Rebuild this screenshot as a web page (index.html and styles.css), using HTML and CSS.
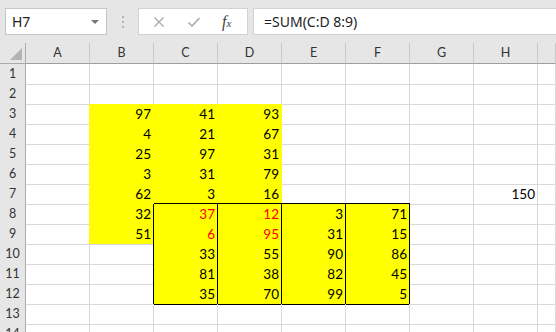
FILE: index.html
```html
<!DOCTYPE html>
<html lang="en">
<head>
    <meta charset="UTF-8">
    <title>Sheet1 - Excel</title>
    <link rel="stylesheet" href="styles.css">
</head>
<body>
    <div class="formula-bar">
        <div class="name-box">
            <span>H7</span>
            <span class="caret"></span>
        </div>
        <svg class="grip" width="4" height="14" viewBox="0 0 4 14">
            <circle cx="2" cy="2" r="1" fill="#a0a0a0"/>
            <circle cx="2" cy="7" r="1" fill="#a0a0a0"/>
            <circle cx="2" cy="12" r="1" fill="#a0a0a0"/>
        </svg>
        <div class="fx-buttons">
            <svg width="12" height="12" viewBox="0 0 12 12">
                <path d="M1.5 1.5 L10.5 10.5 M10.5 1.5 L1.5 10.5" stroke="#ababab" stroke-width="1.4" fill="none"/>
            </svg>
            <svg width="14" height="12" viewBox="0 0 14 12">
                <path d="M1.5 6.5 L5 10 L12.5 2" stroke="#ababab" stroke-width="1.6" fill="none"/>
            </svg>
            <span class="fx">f<i>x</i></span>
        </div>
        <div class="formula-input">=SUM(C:D 8:9)</div>
    </div>

    <div class="sheet">
        <div class="row head">
            <div class="corner"><span class="tri"></span></div>
            <div class="ch">A</div><div class="ch">B</div><div class="ch">C</div><div class="ch">D</div>
            <div class="ch">E</div><div class="ch">F</div><div class="ch">G</div><div class="ch">H</div><div class="ch"></div>
        </div>
        <div class="row">
            <div class="rh">1</div>
            <div class="c"></div><div class="c"></div><div class="c"></div><div class="c"></div>
            <div class="c"></div><div class="c"></div><div class="c"></div><div class="c"></div><div class="c"></div>
        </div>
        <div class="row">
            <div class="rh">2</div>
            <div class="c"></div><div class="c yb"></div><div class="c yb"></div><div class="c yb"></div>
            <div class="c"></div><div class="c"></div><div class="c"></div><div class="c"></div><div class="c"></div>
        </div>
        <div class="row">
            <div class="rh">3</div>
            <div class="c yr"></div><div class="c y">97</div><div class="c y">41</div><div class="c y">93</div>
            <div class="c"></div><div class="c"></div><div class="c"></div><div class="c"></div><div class="c"></div>
        </div>
        <div class="row">
            <div class="rh">4</div>
            <div class="c yr"></div><div class="c y">4</div><div class="c y">21</div><div class="c y">67</div>
            <div class="c"></div><div class="c"></div><div class="c"></div><div class="c"></div><div class="c"></div>
        </div>
        <div class="row">
            <div class="rh">5</div>
            <div class="c yr"></div><div class="c y">25</div><div class="c y">97</div><div class="c y">31</div>
            <div class="c"></div><div class="c"></div><div class="c"></div><div class="c"></div><div class="c"></div>
        </div>
        <div class="row">
            <div class="rh">6</div>
            <div class="c yr"></div><div class="c y">3</div><div class="c y">31</div><div class="c y">79</div>
            <div class="c"></div><div class="c"></div><div class="c"></div><div class="c"></div><div class="c"></div>
        </div>
        <div class="row">
            <div class="rh">7</div>
            <div class="c yr"></div><div class="c y">62</div><div class="c y kb">3</div><div class="c y kb">16</div>
            <div class="c kb"></div><div class="c kb"></div><div class="c"></div><div class="c">150</div><div class="c"></div>
        </div>
        <div class="row">
            <div class="rh">8</div>
            <div class="c yr"></div><div class="c y kr">32</div><div class="c y k kt red">37</div><div class="c y k kt red">12</div>
            <div class="c y k kt">3</div><div class="c y k kt">71</div><div class="c"></div><div class="c"></div><div class="c"></div>
        </div>
        <div class="row">
            <div class="rh">9</div>
            <div class="c yr"></div><div class="c y kr gb">51</div><div class="c y k red">6</div><div class="c y k red">95</div>
            <div class="c y k">31</div><div class="c y k">15</div><div class="c"></div><div class="c"></div><div class="c"></div>
        </div>
        <div class="row">
            <div class="rh">10</div>
            <div class="c"></div><div class="c kr"></div><div class="c y k">33</div><div class="c y k">55</div>
            <div class="c y k">90</div><div class="c y k">86</div><div class="c"></div><div class="c"></div><div class="c"></div>
        </div>
        <div class="row">
            <div class="rh">11</div>
            <div class="c"></div><div class="c kr"></div><div class="c y k">81</div><div class="c y k">38</div>
            <div class="c y k">82</div><div class="c y k">45</div><div class="c"></div><div class="c"></div><div class="c"></div>
        </div>
        <div class="row">
            <div class="rh">12</div>
            <div class="c"></div><div class="c kr"></div><div class="c y k">35</div><div class="c y k">70</div>
            <div class="c y k">99</div><div class="c y k">5</div><div class="c"></div><div class="c"></div><div class="c"></div>
        </div>
        <div class="row">
            <div class="rh">13</div>
            <div class="c"></div><div class="c"></div><div class="c"></div><div class="c"></div>
            <div class="c"></div><div class="c"></div><div class="c"></div><div class="c"></div><div class="c"></div>
        </div>
        <div class="row">
            <div class="rh">14</div>
            <div class="c"></div><div class="c"></div><div class="c"></div><div class="c"></div>
            <div class="c"></div><div class="c"></div><div class="c"></div><div class="c"></div><div class="c"></div>
        </div>
    </div>
</body>
</html>
```

FILE: styles.css
```css
* {
    box-sizing: border-box;
}
body {
    margin: 0;
    width: 556px;
    height: 332px;
    overflow: hidden;
    background: #ffffff;
    font-family: Lato, "Liberation Sans", sans-serif;
    color: #000;
}

/* formula bar */
.formula-bar {
    height: 43px;
    background: #e6e6e6;
    display: flex;
    align-items: flex-start;
    padding-top: 8px;
    padding-left: 5px;
}
.name-box {
    width: 102px;
    height: 27px;
    background: #fff;
    border: 1px solid #c6c6c6;
    display: flex;
    align-items: center;
    justify-content: space-between;
    padding: 0 6px 0 6px;
    font-family: "Noto Sans", sans-serif;
    font-size: 14px;
    color: #222;
}
.caret {
    width: 0;
    height: 0;
    border-left: 4px solid transparent;
    border-right: 4px solid transparent;
    border-top: 4px solid #777;
    margin-right: 1px;
}
.grip {
    margin: 7px 13px 0 14px;
}
.fx-buttons {
    width: 110px;
    height: 27px;
    background: #fff;
    border: 1px solid #d2d2d2;
    display: flex;
    align-items: center;
    padding-left: 14px;
}
.fx-buttons svg:first-child {
    margin-right: 22px;
}
.fx-buttons svg:nth-child(2) {
    margin-right: 21px;
}
.fx {
    font-family: "Liberation Serif", serif;
    font-style: italic;
    font-size: 16px;
    color: #444;
}
.fx i {
    font-size: 11px;
}
.formula-input {
    flex: 1;
    height: 27px;
    margin-left: 5px;
    background: #fff;
    border: 1px solid #d2d2d2;
    border-right: none;
    font-family: "Noto Sans", sans-serif;
    font-size: 14px;
    color: #222;
    display: flex;
    align-items: center;
    padding-left: 10px;
}

/* grid */
.row {
    display: grid;
    grid-template-columns: 26px repeat(8, 64px) 1fr;
    height: 20px;
}
.row.head {
    height: 21px;
    background: #e6e6e6;
}
.corner {
    border-right: 1px solid #ababab;
    border-bottom: 1px solid #ababab;
    position: relative;
}
.tri {
    position: absolute;
    right: 3px;
    bottom: 3px;
    width: 0;
    height: 0;
    border-left: 12px solid transparent;
    border-bottom: 12px solid #b3b3b3;
}
.ch {
    border-right: 1px solid #c8c8c8;
    border-bottom: 1px solid #9e9e9e;
    text-align: center;
    font-size: 12.5px;
    line-height: 20px;
    color: #333;
}
.rh {
    background: #e6e6e6;
    border-right: 1px solid #ababab;
    border-bottom: 1px solid #d0d0d0;
    text-align: center;
    font-size: 12.5px;
    line-height: 20px;
    color: #333;
}
.c {
    border-right: 1px solid #d9d9d9;
    border-bottom: 1px solid #d9d9d9;
    display: flex;
    justify-content: flex-end;
    align-items: flex-end;
    padding: 0 2px 1px 0;
    font-size: 13.5px;
    line-height: 18px;
}
.y {
    background: #ffff00;
    border-right-color: transparent;
    border-bottom-color: transparent;
}
.yb {
    border-bottom-color: #ffff00;
}
.yr {
    border-right-color: #ffff00;
}
.gb {
    border-bottom-color: #d9d9d9;
}
.k {
    border-right-color: #000;
    border-bottom-color: #000;
}
.kb {
    border-bottom-color: #000;
}
.kt {
    box-shadow: 0 -1px 0 #000;
}
.kr {
    border-right-color: #000;
}
.red {
    color: #ff0000;
}
```
